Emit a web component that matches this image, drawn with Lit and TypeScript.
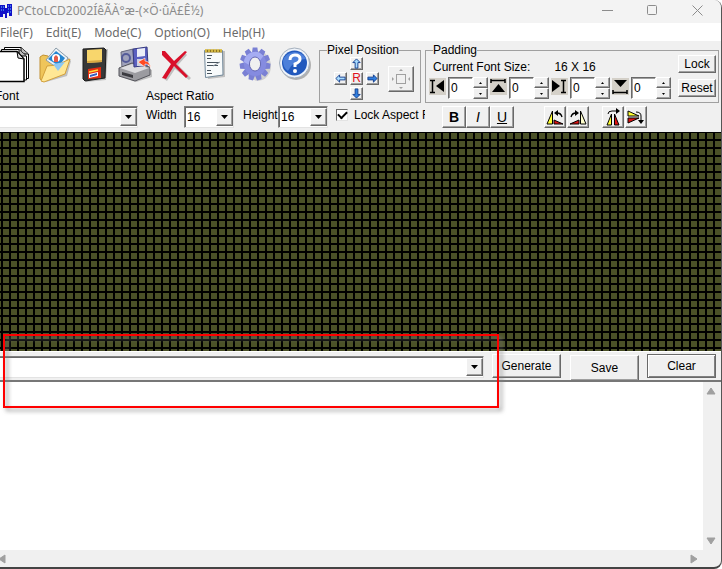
import { LitElement, html, css, svg, nothing } from "lit";
import { customElement } from "lit/decorators.js";

const pages = svg`
  <g stroke="#000" fill="#fff">
    <path d="M10.500 3.500H27L34.500 10V34.500H10.500Z"/><path d="M27 3.500V10H34" fill="#bbb"/>
    <path d="M7.500 5.500H25L32.500 12V36H7.500Z"/><path d="M25 5.500V12H32" fill="#bbb"/>
    <path d="M4.500 7.500H23L30 15V37.500H4.500Z" stroke-width="1.500"/><path d="M23 7.500L24 14L30 15Z" fill="#ddd"/>
  </g>`;
const folder = svg`
  <path d="M8 14L17 11L20 14L33 12L37 17L33 32L12 38L8 36Z" fill="#0003"/>
  <path d="M6 13L9 11L14 12L17 15L31 15V29L9 37L6 35Z" fill="#efc55a" stroke="#c29132"/>
  <path d="M22 4L34 14L26 26L12 16Z" fill="#eef3f7" stroke="#8a9ba8"/>
  <path d="M22 7L31 14L25 22L14 15Z" fill="#2585d0"/>
  <circle cx="22" cy="14" r="4" fill="#fff"/><path d="M20 18V13L22 11L24 13V18Z" fill="#e35b48"/>
  <path d="M7 37L13 22L23 21L36 15L31 30L10 38Z" fill="#ffe795" stroke="#d3a03b"/>
  <path d="M19 20L31 18L24 27Z" fill="#8cc8f5"/>`;
const floppy = svg`
  <path d="M12 6L34 5L32 36L12 38Z" fill="#0003"/>
  <path d="M9 5L30 4L32 6L31 34L11 37L9 35Z" fill="#383838" stroke="#1c1c1c"/>
  <path d="M13 6L28 5V18L13 19Z" fill="#f8d66c"/><path d="M13 17L28 16V18L13 19Z" fill="#d9a841"/>
  <path d="M14 25L27 23V34L14 35Z" fill="#e52d12"/>
  <path d="M15 30L24 28V32L15 34Z" fill="#fff"/><path d="M16 31L23 29V31L16 33Z" fill="#315bc0"/>
  <path d="M15 28L24 26" stroke="#ffdf34" stroke-width="1.5"/>`;
const restore = svg`
  <path d="M7 25L18 20L38 26V33L22 38L7 33Z" fill="#0003"/>
  <path d="M7 8L19 5L20 21L8 24Z" fill="#9fa2bb" stroke="#686a7c"/>
  <circle cx="12" cy="14" r="4" fill="none" stroke="#555c99" stroke-width="2"/>
  <path d="M5 24L18 19L36 23V31L21 37L5 32Z" fill="#9b9ba0" stroke="#55555c"/>
  <path d="M6 24L18 20L35 24L21 29Z" fill="#dddde0"/><path d="M8 28L19 31V34L8 31Z" fill="#3b3b40"/>
  <path d="M19 5L33 3L34 21L20 23Z" fill="#5a5fc0" stroke="#363a80"/>
  <path d="M23 5L31 4V12L23 13Z" fill="#eceef8"/><path d="M23 15H31V22H23Z" fill="#cdd0e0"/>
  <path d="M37 25Q36 20 31 20V23L24 18L31 14V17Q36 17 37 25Z" fill="#ff4a22" stroke="#fff" stroke-width=".6"/>`;
const cross = svg`
  <path d="M11 10L21 18L31 9L33 11L24 21L37 34L35 36L21 25L13 37L10 35L18 21L10 12Z" fill="#0003"/>
  <path d="M8 7L11 7L20 17L31 7L33 8L22 20L34 32L32 34L20 22L12 35L8 34L17 20L8 11Z" fill="#d9102a"/>`;
const notepad = svg`
  <path d="M12 7H31V33L14 35Z" fill="#0003"/>
  <path d="M10.500 6.500H28.500L29 31L11.500 33.500Z" fill="#f7fafb" stroke="#71889a"/>
  <path d="M11 7H28" stroke="#8b7420" stroke-width="3"/>
  <path d="M12 8V5M15 8V5M18 8V5M21 8V5M24 8V5M27 8V5" stroke="#e7c94b" stroke-width="1.500"/>
  <path d="M13 11.500H18M13 14.500H17M13 18.500H25M13 21.500H24M13 26.500H17M13 29.500H18" stroke="#47535d"/>
  <path d="M19 22L26 18" stroke="#8b969f"/>`;
const teeth = Array.from({ length: 11 }, (_, i) => svg`
  <path d="M17.500 10L18.500 3.500H23.500L24.500 10Z" transform=${`rotate(${i * 360 / 11} 21 20)`}/>`);
const gear = svg`
  <ellipse cx="24" cy="22" rx="13" ry="15" fill="#0002"/>
  <g transform="translate(1.500 0) scale(.93 1)">
    <g fill="#7a80d4">${teeth}</g>
    <circle cx="21" cy="20" r="12" fill="#858be0"/>
    <path d="M9 18A12 12 0 0 1 30 12L26 17A6 7 0 0 0 15 21Z" fill="#a5acf2"/>
    <ellipse cx="21" cy="20" rx="6" ry="7" fill="#f0f0f0" stroke="#6165b0"/>
  </g>`;
const help = svg`
  <circle cx="22" cy="21" r="15" fill="#0004"/>
  <circle cx="20.500" cy="19" r="15" fill="#eef3fa" stroke="#a5b0bd"/>
  <circle cx="20.500" cy="19" r="12.500" fill="#2259bd"/>
  <path d="M9 17A12 11 0 0 1 32 15Q20 15 14 27Q9 24 9 17Z" fill="#4d80da"/>
  <path d="M16 16Q16 11 21 11Q26 11 26 15Q26 18 21 20V23" fill="none" stroke="#fff" stroke-width="3"/>
  <circle cx="21" cy="27" r="2" fill="#fff"/>`;

const tools = [
  ["New", pages], ["Open", folder], ["Save", floppy], ["Restore", restore],
  ["Delete", cross], ["Notes", notepad], ["Options", gear], ["Help", help],
] as const;

const arrow = (deg: number, fill: string) => svg`
  <path d="M6 1L10 5H7.500V11H4.500V5H2Z" fill=${fill} stroke="#123c8c" transform=${`rotate(${deg} 6 6)`}/>`;

const pads = [
  ["Left", svg`<path d="M1 2.500H6M3.500 2.500V14.500M1 14.500H6" fill="none" stroke="#000" stroke-width="1.500"/><path d="M15 2V14L7 8Z"/>`],
  ["Top", svg`<path d="M1 2.500H15M1 1V5M15 1V5" fill="none" stroke="#000" stroke-width="1.500"/><path d="M2 14H15L8.500 6Z"/>`],
  ["Right", svg`<path d="M10 2.500H15M12.500 2.500V14.500M10 14.500H15" fill="none" stroke="#000" stroke-width="1.500"/><path d="M1 2V14L9 8Z"/>`],
  ["Bottom", svg`<path d="M1 14.500H15M1 12V16M15 12V16" fill="none" stroke="#000" stroke-width="1.500"/><path d="M2 2H15L8.500 9Z"/>`],
] as const;

const turns = [
  ["Rotate left", svg`<path d="M7.500 4V17H2Z" fill="#ff3" stroke="#000"/><path d="M9 17V13L18 17Z" fill="#d11" stroke="#000"/><path d="M17 10Q16 6 12 6" fill="none" stroke="#000" stroke-width="1.300"/><path d="M9 6L13 3V9Z"/>`],
  ["Rotate right", svg`<path d="M12.500 4V17H18Z" fill="#ffc" stroke="#000"/><path d="M11 17V13L2 17Z" fill="#d11" stroke="#000"/><path d="M3 10Q4 6 8 6" fill="none" stroke="#000" stroke-width="1.300"/><path d="M11 6L7 3V9Z"/>`],
  ["Flip horizontally", svg`<path d="M8.500 7V18H4Z" fill="#ff3" stroke="#000"/><path d="M11.500 7V18H16Z" fill="#d11" stroke="#000"/><path d="M5 7Q5 4 9 4H14" fill="none" stroke="#000"/><path d="M13 1L17 4L13 7Z"/>`],
  ["Flip vertically", svg`<path d="M2 4V9H13Z" fill="#ff3" stroke="#000"/><path d="M2 16V11H13Z" fill="#d11" stroke="#000"/><path d="M10 5Q15 5 15 9V14" fill="none" stroke="#000"/><path d="M12 13L15 17L18 13Z"/>`],
] as const;

@customElement("app-root")
export class AppRoot extends LitElement {
  static styles = css`
    :host {
      display: flex; flex-direction: column; box-sizing: border-box;
      height: 100vh; min-height: 480px; overflow: hidden;
      background: #f0f0f0; color: #000; border-right: 1px solid #555; border-bottom: 2px solid #444;
      border-radius: 0 8px 8px 0;
      font: 12px/14px "Liberation Sans", Arial, sans-serif;
    }
    * { box-sizing: border-box; }
    button, select, input, textarea { font: inherit; color: inherit; margin: 0; padding: 0; border-radius: 0; }
    svg { display: block; flex: none; }
    .title { display: flex; align-items: center; height: 23px; background: #f3f3f3; color: #8c8c8c; font: 12px/20px "Noto Sans", sans-serif; white-space: nowrap; }
    .title h1 { flex: 1; margin: 0 0 2px 5px; font: inherit; }
    .title button { width: 45px; height: 20px; margin-bottom: 2px; display: grid; place-items: center; border: 0; background: none; }
    .title .last { margin-right: 1px; }
    .menu { display: flex; gap: 13px; height: 18px; background: #fff; color: #6b6b6b; font: 12px/20px "Noto Sans", sans-serif; }
    .menu a { color: inherit; text-decoration: none; }
    .top { display: flex; height: 62px; padding-right: 2px; }
    .left { width: 319px; flex: none; }
    .tools { display: flex; margin: 3px 0 0 -6px; }
    .tools button { width: 40px; height: 40px; border: 0; background: none; flex: none; }
    .captions { display: flex; margin-top: 5px; white-space: nowrap; }
    .captions .font { width: 151px; margin-left: -5px; }
    fieldset { min-width: 0; margin: 2px 0 0; padding: 0; border: 1px solid #a0a0a0; }
    legend { margin-left: 7px; padding: 0; height: 14px; line-height: 14px; }
    .position { width: 102px; flex: none; display: block; }
    .position .body { display: flex; align-items: center; gap: 9px; padding-left: 14px; }
    .cross { display: grid; grid-template: "a u b" 13px "w r e" 13px "c d f" 13px / 13px 13px 13px; gap: 2px 3px; }
    .raised { display: grid; place-items: center; background: #f0f0f0; border: 1px solid; border-color: #fff #696969 #696969 #fff; box-shadow: inset -1px -1px #a0a0a0; white-space: nowrap; }
    .up { grid-area: u; }
    .down { grid-area: d; }
    .west { grid-area: w; }
    .east { grid-area: e; }
    .reset { grid-area: r; color: #e01020; line-height: 11px; }
    .center { width: 26px; height: 26px; }
    .padding { flex: 1; margin-left: 4px; }
    .padding .body { display: flex; justify-content: space-between; padding: 0 2px 0 3px; }
    .size { display: flex; gap: 24px; padding: 3px 0 0 4px; margin-bottom: 3px; }
    .pads { display: flex; gap: 2px; }
    .pad { display: flex; gap: 2px; }
    .glyph { background: #d4d0c8; margin-top: 1px; width: 17px; height: 17px; }
    .number { display: flex; }
    .number input { width: 25px; height: 22px; padding-left: 2px; border: 1px solid; border-color: #696969 #fff #fff #696969; box-shadow: inset 1px 1px #a0a0a0; background: #fff; }
    .spin { display: grid; width: 15px; height: 22px; }
    .side { display: flex; flex-direction: column; gap: 6px; margin-top: -2px; }
    .side button { width: 38px; height: 18px; }
    .bar { display: flex; align-items: center; height: 29px; padding-bottom: 2px; white-space: nowrap; }
    .combo { display: grid; grid-template-columns: 1fr 17px; height: 22px; border: 1px solid; border-color: #808080 #e3e3e3 #e3e3e3 #808080; box-shadow: inset 1px 1px #696969; background: #fff; align-items: center; }
    .combo select { grid-area: 1 / 1 / 2 / 3; width: 100%; height: 18px; padding-left: 2px; appearance: none; border: 0; background: none; }
    .combo .drop { grid-area: 1 / 2; height: 18px; pointer-events: none; }
    .fonts { width: 138px; border-left-width: 0; box-shadow: inset 0 1px #696969; }
    .small { width: 50px; }
    .width { width: 38px; margin: 0 0 4px 8px; }
    .height { width: 35px; margin: 0 0 4px 9px; }
    .lock { display: flex; align-items: center; gap: 6px; width: 89px; margin: 0 17px 4px 8px; overflow: hidden; }
    .lock input { appearance: none; flex: none; width: 12px; height: 12px; background: #fff; border: 1px solid; border-color: #696969 #e3e3e3 #e3e3e3 #696969; display: grid; place-items: center; }
    .lock input:checked::after { content: ""; width: 7px; height: 4px; border: solid #000; border-width: 0 0 2px 2px; rotate: -45deg; margin-bottom: 2px; }
    .group { display: flex; gap: 1px; margin-right: 13px; }
    .group button { width: 22px; height: 22px; }
    .style { margin-right: 30px; gap: 0; }
    .style button { width: 24px; font: bold 14px/16px "Liberation Sans", Arial, sans-serif; }
    .style .italic { font-style: italic; font-weight: normal; }
    .style .under { text-decoration: underline; font-weight: normal; }
    .canvas {
      flex: 1 1 219px; border-top: 1px solid #000; background-color: #4b5127;
      background-image: linear-gradient(#000 2px, transparent 2px), linear-gradient(90deg, #000 2px, transparent 2px);
      background-size: 8px 8px; background-position: 1px -2px;
    }
    .entry { display: flex; align-items: flex-start; height: 29px; padding: 2px 5px 0 0; border-top: 1px solid #fff; }
    .field { flex: 1; position: relative; margin-right: 8px; }
    .field .combo { border-left-width: 0; margin-top: 2px; box-shadow: inset 0 1px #696969; }
    .mark { position: absolute; z-index: 2; left: 3px; right: -15px; top: -20px; height: 74px; border: 2px solid #f00; filter: drop-shadow(3px 3px 2px #808080d0); pointer-events: none; }
    .entry button { width: 69px; height: 24px; padding-bottom: 1px; }
    .entry .save { margin: 1px 8px 0 9px; height: 26px; padding: 0; }
    .entry .clear { border-color: #696969; box-shadow: inset 1px 1px #fff, inset -1px -1px #808080; }
    .output { flex: 1 1 187px; display: grid; grid-template: 1fr 17px / 1fr 18px; border-top: 2px solid #777; }
    .output textarea { resize: none; width: 100%; height: 100%; border: 0; background: #fff; outline: 0; }
    .track { display: flex; justify-content: space-between; align-items: center; }
    .vertical { flex-direction: column; padding: 4px 2px 4px 0; }
    .horizontal { margin-left: -3px; padding-right: 4px; }
  `;

  private drop() {
    return html`<span class="raised drop" aria-hidden="true"><svg width="7" height="4"><path d="M0 0H7L3.500 4Z"/></svg></span>`;
  }

  private combo(label: string, cls: string, value?: string) {
    return html`<span class="combo ${cls}">
      <select aria-label=${label}><option>${value ?? nothing}</option></select>${this.drop()}
    </span>`;
  }

  private nudge(cls: string, label: string, deg: number, fill = "#a8dcff") {
    return html`<button class="raised ${cls}" aria-label=${label}><svg width="11" height="11" viewBox="0 0 12 12">${arrow(deg, fill)}</svg></button>`;
  }

  private scroll(label: string, deg: number) {
    return html`<svg width="10" height="10" role="img" aria-label=${label}><path d="M5 2L9 8H1Z" fill="#a0a0a0" stroke="#a0a0a0" stroke-linejoin="round" transform=${`rotate(${deg} 5 5)`}/></svg>`;
  }

  render() {
    return html`
      <header class="title">
        <svg width="12" height="16"><path d="M0 1H5V4H7V0H12V12H9V9H7V14H5V10H3V13H0Z" fill="#1010c8"/><path d="M1 3H2M3 3H4M1 6H2M3 6H4M8 2H9M10 2H11M8 5H9M10 5H11M8 8H9M10 8H11" stroke="#6cf"/></svg>
        <h1>PCtoLCD2002ÍêÃÀ°æ-(×Ö·ûÄ£Ê½)</h1>
        <button aria-label="Minimize"><svg width="11" height="11"><path d="M0 5.500H11" stroke="#8c8c8c"/></svg></button>
        <button aria-label="Maximize"><svg width="11" height="11"><rect x=".5" y=".5" width="9" height="9" rx="1" fill="none" stroke="#8c8c8c"/></svg></button>
        <button class="last" aria-label="Close"><svg width="11" height="11"><path d="M.5 .5L10.500 10.500M10.500 .5L.5 10.500" stroke="#8c8c8c"/></svg></button>
      </header>
      <nav class="menu">
        ${["File(F)", "Edit(E)", "Mode(C)", "Option(O)", "Help(H)"].map((m) => html`<a href="#">${m}</a>`)}
      </nav>

      <section class="top">
        <div class="left">
          <div class="tools">
            ${tools.map(([name, art]) => html`<button aria-label=${name}><svg width="40" height="40">${art}</svg></button>`)}
          </div>
          <div class="captions"><span class="font">Font</span><span>Aspect Ratio</span></div>
        </div>
        <fieldset class="position">
          <legend>Pixel Position</legend>
          <div class="body">
            <div class="cross">
              ${this.nudge("up", "Up", 0)}
              ${this.nudge("west", "Left", -90)}
              <button class="raised reset">R</button>
              ${this.nudge("east", "Right", 90, "#2f7fe0")}
              ${this.nudge("down", "Down", 180, "#2f7fe0")}
            </div>
            <button class="raised center" aria-label="Center">
              <svg width="20" height="20"><rect x="5.500" y="5.500" width="9" height="9" fill="none" stroke="#a0a0a0"/><path d="M8 2H12L10 0ZM8 18H12L10 20ZM1 8V12L3 10ZM19 8V12L17 10Z" fill="#a0a0a0"/></svg>
            </button>
          </div>
        </fieldset>
        <fieldset class="padding">
          <legend>Padding</legend>
          <div class="body">
            <div>
              <div class="size"><span>Current Font Size:</span><span>16 X 16</span></div>
              <div class="pads">
                ${pads.map(([name, art]) => html`<div class="pad">
                  <svg class="glyph" viewBox="0 0 17 17">${art}</svg>
                  <span class="number">
                    <input aria-label=${`${name} padding`} value="0" />
                    <span class="spin">
                      <button class="raised" aria-label="Increase"><svg width="3" height="2"><path d="M0 2H3L1.500 0Z"/></svg></button>
                      <button class="raised" aria-label="Decrease"><svg width="3" height="2"><path d="M0 0H3L1.500 2Z"/></svg></button>
                    </span>
                  </span>
                </div>`)}
              </div>
            </div>
            <div class="side"><button class="raised">Lock</button><button class="raised">Reset</button></div>
          </div>
        </fieldset>
      </section>

      <section class="bar">
        ${this.combo("Font", "fonts")}
        <span class="width">Width</span>${this.combo("Width", "small", "16")}
        <span class="height">Height</span>${this.combo("Height", "small", "16")}
        <label class="lock"><input type="checkbox" checked />Lock Aspect R</label>
        <div class="group style">
          <button class="raised">B</button><button class="raised italic">I</button><button class="raised under">U</button>
        </div>
        ${[turns.slice(0, 2), turns.slice(2)].map((pair) => html`<div class="group">
          ${pair.map(([name, art]) => html`<button class="raised" aria-label=${name}><svg width="20" height="20">${art}</svg></button>`)}
        </div>`)}
      </section>

      <div class="canvas" role="img" aria-label="Pixel grid"></div>

      <section class="entry">
        <div class="field">${this.combo("Text", "text")}<div class="mark"></div></div>
        <button class="raised">Generate</button>
        <button class="raised save">Save</button>
        <button class="raised clear">Clear</button>
      </section>

      <section class="output">
        <textarea aria-label="Output"></textarea>
        <div class="track vertical">${this.scroll("Scroll up", 0)}${this.scroll("Scroll down", 180)}</div>
        <div class="track horizontal">${this.scroll("Scroll left", -90)}${this.scroll("Scroll right", 90)}</div>
      </section>
    `;
  }
}
